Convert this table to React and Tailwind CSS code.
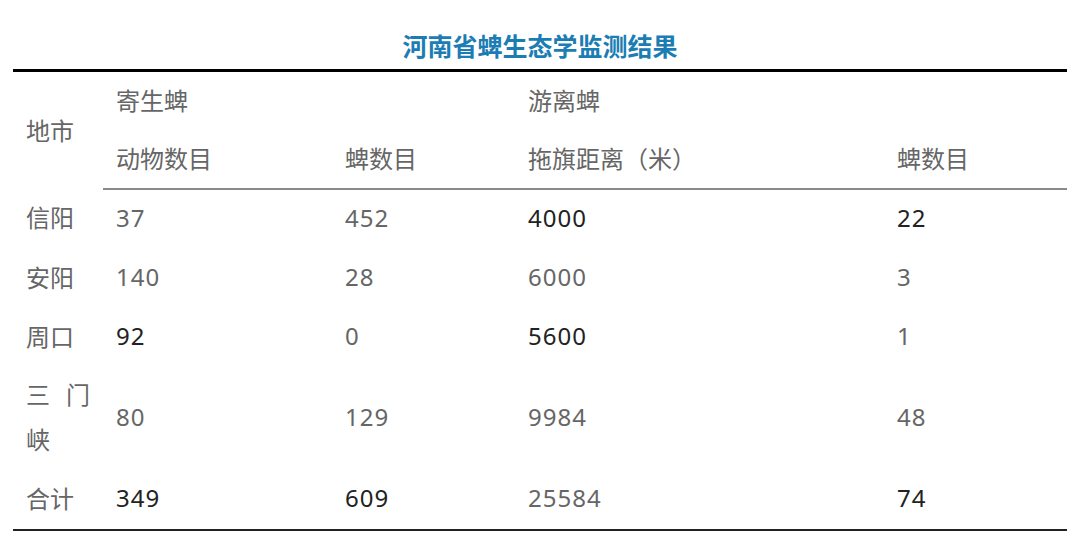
import React from 'react'

const rows = [
    { city: '信阳', a: ['37', 'g'], b: ['452', 'g'], c: ['4000', 'd'], d: ['22', 'd'] },
    { city: '安阳', a: ['140', 'g'], b: ['28', 'g'], c: ['6000', 'g'], d: ['3', 'g'] },
    { city: '周口', a: ['92', 'd'], b: ['0', 'g'], c: ['5600', 'd'], d: ['1', 'g'] },
    { city: '三门峡', a: ['80', 'g'], b: ['129', 'g'], c: ['9984', 'g'], d: ['48', 'g'] },
    { city: '合计', a: ['349', 'd'], b: ['609', 'd'], c: ['25584', 'g'], d: ['74', 'd'] },
]

function Num ({ v }) {
    return (
        <td className={'px-[13px] pt-[5px] pb-[9px] align-middle tracking-[1px] ' + (v[1] === 'd' ? 'text-[#222]' : 'text-[#666]')}>
            {v[0]}
        </td>
    )
}

export default function App () {
    return (
        <div className="w-[1080px] h-[556px] bg-white px-[13px] pt-[29px] font-['Noto_Sans','Noto_Sans_CJK_SC',sans-serif]">

            {/* Title */}
            <h1 className="text-center text-[25px] leading-[34px] font-bold text-[#1b7db3] mb-[6px]">
                河南省蜱生态学监测结果
            </h1>

            <table className="w-full border-collapse border-t-[3px] border-b-[2px] border-t-black border-b-[#222] text-[24px] leading-[45px]">
                <colgroup>
                    <col className="w-[90px]" />
                    <col className="w-[229px]" />
                    <col className="w-[183px]" />
                    <col className="w-[369px]" />
                    <col />
                </colgroup>
                <thead className="text-[#666]">
                    <tr>
                        <td rowSpan={2} className="px-[13px] align-middle">地市</td>
                        <td colSpan={2} className="px-[13px] pt-[6px] pb-[7px]">寄生蜱</td>
                        <td colSpan={2} className="px-[13px] pt-[6px] pb-[7px]">游离蜱</td>
                    </tr>
                    <tr>
                        <td className="px-[13px] pt-[6px] pb-[7px] border-b-2 border-b-[#8a8a8a]">动物数目</td>
                        <td className="px-[13px] pt-[6px] pb-[7px] border-b-2 border-b-[#8a8a8a]">蜱数目</td>
                        <td className="px-[13px] pt-[6px] pb-[7px] border-b-2 border-b-[#8a8a8a]">拖旗距离（米）</td>
                        <td className="px-[13px] pt-[6px] pb-[7px] border-b-2 border-b-[#8a8a8a]">蜱数目</td>
                    </tr>
                </thead>
                <tbody>
                    {rows.map((r) => (
                        <tr key={r.city}>
                            <td className="px-[13px] pt-[5px] pb-[8px] text-[#666] text-justify">{r.city}</td>
                            <Num v={r.a} />
                            <Num v={r.b} />
                            <Num v={r.c} />
                            <Num v={r.d} />
                        </tr>
                    ))}
                </tbody>
            </table>
        </div>
    )
}
